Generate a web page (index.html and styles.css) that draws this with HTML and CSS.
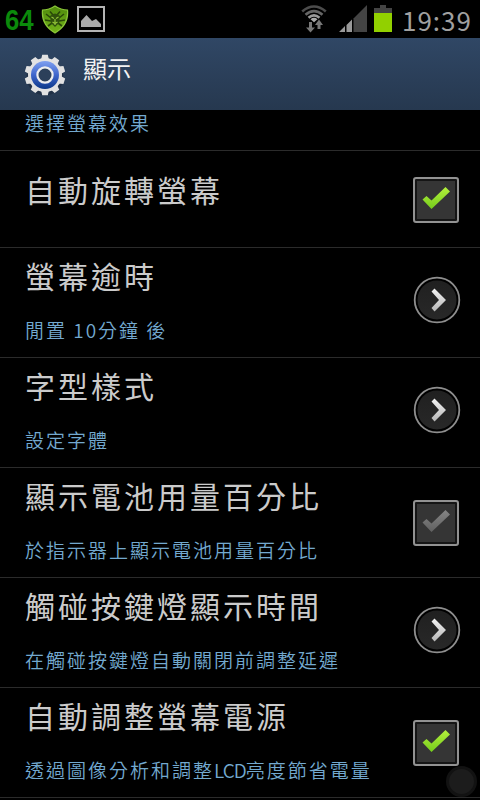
FILE: index.html
```html
<!DOCTYPE html>
<html lang="zh-Hant">
<head>
<meta charset="utf-8">
<title>顯示</title>
<link rel="stylesheet" href="styles.css">
</head>
<body>
<svg width="0" height="0" class="defs" aria-hidden="true">
  <defs>
    <linearGradient id="green" x1="0" y1="0" x2="0" y2="1"><stop offset="0" stop-color="#b4f03c"/><stop offset="1" stop-color="#74cc1c"/></linearGradient>
    <linearGradient id="gray" x1="0" y1="0" x2="0" y2="1"><stop offset="0" stop-color="#858585"/><stop offset="1" stop-color="#606060"/></linearGradient>
    <linearGradient id="silver" x1="0" y1="0" x2="0" y2="1"><stop offset="0" stop-color="#f4f4f4"/><stop offset="1" stop-color="#b5b5b5"/></linearGradient>
    <linearGradient id="blue" x1="0" y1="0" x2="0" y2="1"><stop offset="0" stop-color="#7fa0f0"/><stop offset=".5" stop-color="#3f66cc"/><stop offset="1" stop-color="#0c3888"/></linearGradient>
    <linearGradient id="shield" x1="0" y1="0" x2="0" y2="1"><stop offset="0" stop-color="#4f8a0c"/><stop offset="1" stop-color="#74b41a"/></linearGradient>
    <linearGradient id="disc" x1="0" y1="0" x2="0" y2="1"><stop offset="0" stop-color="#202020"/><stop offset="1" stop-color="#282828"/></linearGradient>
    <path id="tick" d="M9.500 22.500 L13.500 19 L18.500 23.500 L32.500 10 L37 14.500 L18.500 32 Z"/>
    <g id="arrow">
      <circle cx="24" cy="24" r="22.300" fill="#000" stroke="#8e8e8e" stroke-width="1.800"/>
      <circle cx="24" cy="24" r="19.500" fill="url(#disc)"/>
      <path d="M18.500 15.500 L21.500 12.500 L33 24 L21.500 35.500 L18.500 32 L26 24 Z" fill="url(#silver)"/>
    </g>
  </defs>
</svg>
<div class="screen">
  <div class="status">
    <span class="temp">64</span>
    <svg class="shield" width="28" height="30" viewBox="0 0 28 30">
      <path d="M14 1 Q20 5 26.500 5 Q28 20 14 28 Q0 20 1.500 5 Q8 5 14 1Z" fill="url(#shield)" stroke="#8cc83a" stroke-width="1.200"/>
      <path d="M5 9 L10 13 M23 9 L18 13 M4 15 L10 16 M24 15 L18 16 M7 21 L11 18 M21 21 L17 18 M9 6.500 L12 10 M19 6.500 L16 10" stroke="#294808" stroke-width="1.600" fill="none"/>
      <path d="M9 11 Q14 6 19 11 L18 18 L14 22 L10 18Z" fill="#2f500c"/>
      <path d="M10.500 12 L13 13.500 M17.500 12 L15 13.500 M14 14 V20 M11.500 17 L14 18.500 L16.500 17" stroke="#92c438" stroke-width="1.200" fill="none"/>
    </svg>
    <svg class="photo" width="28" height="26" viewBox="0 0 28 26">
      <rect x="1" y="1" width="26" height="24" fill="#000" stroke="#b4b4b4" stroke-width="2"/>
      <path d="M4 21 V15 L9.500 9 L15 15 L19 13 L24 18 V21Z" fill="#aaa"/>
    </svg>
    <span class="gap"></span>
    <svg class="wifi" width="26" height="29" viewBox="0 0 26 29">
      <g fill="none" stroke-width="2.600">
        <path d="M1.200 6.500 Q13 -3.500 24.800 6.500" stroke="#4c4c4c"/>
        <path d="M4.500 9.800 Q13 2.500 21.500 9.800" stroke="#666"/>
        <path d="M7.500 12.800 Q13 8 18.500 12.800" stroke="#9a9a9a"/>
      </g>
      <path d="M9.500 14.200 Q13 11.500 16.500 14.200 L13 17.200Z" fill="#aaa"/>
      <path d="M8 17 H11 V22.500 H14 L9.500 27.500 L5 22.500 H8Z M16.500 24 V20 H14 L18 14.500 L22 20 H19.500 V24Z" fill="#777"/>
    </svg>
    <svg class="signal" width="28" height="27" viewBox="0 0 28 27">
      <path d="M0 27 L6 21 V27Z M7.500 27 V20 L13 14.500 V27Z" fill="#999"/>
      <path d="M14.500 27 V13.500 L28 0 V27Z" fill="#444"/>
    </svg>
    <svg class="battery" width="18" height="27" viewBox="0 0 18 27">
      <path d="M6 0 H12 V3 H18 V8 H0 V3 H6Z" fill="#444"/>
      <rect y="8" width="18" height="19" fill="#92d000"/>
    </svg>
    <span class="clock">19:39</span>
  </div>
  <div class="header">
    <svg class="gear" width="42" height="44" viewBox="-21 -21 42 44">
      <circle r="16" cy="2" fill="none" stroke="#182436" stroke-width="5" opacity=".5"/>
      <g fill="#e2e2e2">
        <path id="t" d="M-4 -15 L-2.800 -20.300 H2.800 L4 -15Z M-4 15 L-2.800 20.300 H2.800 L4 15Z"/>
        <use href="#t" transform="rotate(36)"/><use href="#t" transform="rotate(72)"/>
        <use href="#t" transform="rotate(108)"/><use href="#t" transform="rotate(144)"/>
        <circle r="17"/>
      </g>
      <circle r="14" fill="url(#blue)"/>
      <circle r="7.600" fill="#2c405a" stroke="#eee" stroke-width="2.200"/>
    </svg>
    <h1>顯示</h1>
  </div>
  <div class="list">
    <div class="row partial"><div class="text"><p>選擇螢幕效果</p></div></div>
    <div class="row single"><div class="text"><h2>自動旋轉螢幕</h2></div>
      <span class="box"><svg width="46" height="46" viewBox="0 0 46 46"><use href="#tick" fill="url(#green)"/></svg></span></div>
    <div class="row"><div class="text"><h2>螢幕逾時</h2><p>閒置 10分鐘 後</p></div>
      <svg class="go" width="48" height="48"><use href="#arrow"/></svg></div>
    <div class="row"><div class="text"><h2>字型樣式</h2><p>設定字體</p></div>
      <svg class="go" width="48" height="48"><use href="#arrow"/></svg></div>
    <div class="row"><div class="text"><h2>顯示電池用量百分比</h2><p>於指示器上顯示電池用量百分比</p></div>
      <span class="box"><svg width="46" height="46" viewBox="0 0 46 46"><use href="#tick" fill="url(#gray)"/></svg></span></div>
    <div class="row"><div class="text"><h2>觸碰按鍵燈顯示時間</h2><p>在觸碰按鍵燈自動關閉前調整延遲</p></div>
      <svg class="go" width="48" height="48"><use href="#arrow"/></svg></div>
    <div class="row"><div class="text"><h2>自動調整螢幕電源</h2><p>透過圖像分析和調整<span class="latin">LCD</span>亮度節省電量</p></div>
      <span class="box"><svg width="46" height="46" viewBox="0 0 46 46"><use href="#tick" fill="url(#green)"/></svg></span></div>
  </div>
  <div class="touch"></div>
</div>
</body>
</html>
```

FILE: styles.css
```css
* { box-sizing: border-box; margin: 0; padding: 0; }
body { background: #000; font-family: "Noto Sans CJK TC", sans-serif; }
.defs { position: absolute; }
.screen { position: relative; width: 480px; height: 800px; overflow: hidden; background: #000; }
.status { display: flex; align-items: flex-start; height: 38px; padding: 5px 8px 0 5px; }
.temp { width: 36px; font: bold 30px/29px "Liberation Sans", sans-serif; color: #0b8a0b; transform: scaleX(.86); transform-origin: left; }
.photo { margin: 1px 0 0 8px; }
.gap { flex: 1; }
.signal { margin-left: 12px; }
.battery { margin-left: 7px; }
.clock { width: 70px; margin-left: 10px; font: 400 26px/29px "Noto Sans CJK TC", sans-serif; letter-spacing: 1px; color: #a0a0a0; white-space: nowrap; }
.header { display: flex; height: 72px; padding: 16px 24px 0; background: linear-gradient(#304765, #26384f); }
.header h1 { margin: -4px 0 0 17px; font-size: 24px; line-height: 36px; font-weight: 400; color: #f2f2f2; }
.row { display: flex; justify-content: space-between; height: 110px; padding: 0 20px 0 25px; border-bottom: 1px solid #2b2b2b; }
.text { white-space: nowrap; }
.row h2 { height: 58px; font-size: 30px; font-weight: 400; line-height: 54px; letter-spacing: 3px; color: #cbcbcb; }
.row p { font-size: 19px; font-weight: 350; line-height: 48px; letter-spacing: 2px; color: #73a9cf; }
.latin { letter-spacing: -1px; }
.partial { height: 41px; }
.partial p { line-height: 26px; }
.single { height: 97px; }
.single h2 { line-height: 77px; }
.box { width: 46px; height: 46px; margin: 32px 1px 0 0; border: 2px solid #929292; border-radius: 3px; background: #353535; box-shadow: inset 0 0 0 2px #151515; }
.box svg { display: block; margin: -2px; }
.single .box { margin-top: 26px; }
.go { margin: 28px -1px 0 0; }
.touch { position: absolute; left: 446px; top: 766px; width: 31px; height: 31px; border: 3px solid #121212; border-radius: 50%; background: #1c1c1c; }
```
